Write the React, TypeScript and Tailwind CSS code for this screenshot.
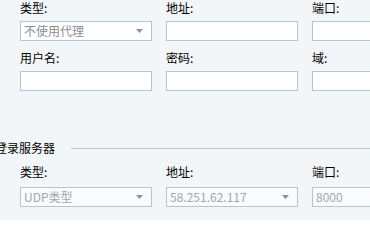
import React from 'react';

const font = { fontFamily: '"Noto Sans CJK SC", "Liberation Sans", sans-serif' };

function Caret() {
  return (
    <svg width="7" height="4" viewBox="0 0 7 4" className="shrink-0">
      <path d="M0 0 L7 0 L3.5 4 Z" fill="#8c9296" />
    </svg>
  );
}

function Field({ label, value, select, dim }: { label: string; value?: string; select?: boolean; dim?: boolean }) {
  return (
    <div className="flex flex-col">
      <div className={'h-4 leading-4 text-[12px] text-black ' + (dim ? 'mb-[7px]' : 'mb-[5px]')}>{label}</div>
      <div
        className={
          'h-5 border border-[#b3c6ce] flex items-center pl-[3px] pr-[8px] text-[12px] leading-4 ' +
          (dim ? 'bg-[#f9fbfc] text-[#a3a7aa]' : 'bg-white text-[#8a8d90]')
        }
      >
        <span className="flex-1 truncate">{value}</span>
        {select && <Caret />}
      </div>
    </div>
  );
}

export default function App() {
  return (
    <div className="w-[370px] h-[220px] overflow-hidden bg-[#f3f6f9] relative" style={font}>
      <div className="pl-5 grid grid-cols-[132px_132px_132px] gap-x-[14px] gap-y-[9px]">
        <Field label="类型:" value="不使用代理" select />
        <Field label="地址:" />
        <Field label="端口:" />
        <Field label="用户名:" />
        <Field label="密码:" />
        <Field label="域:" />
      </div>

      <div className="mt-[49px] flex items-center -ml-[5px] h-4">
        <span className="text-[12px] leading-4 text-black whitespace-nowrap">登录服务器</span>
        <div className="ml-[16px] flex-1 h-px bg-[#b4c8cf]" />
      </div>

      <div className="mt-[8px] pl-5 grid grid-cols-[132px_132px_132px] gap-x-[14px]">
        <Field label="类型:" value="UDP类型" select dim />
        <Field label="地址:" value="58.251.62.117" select dim />
        <Field label="端口:" value="8000" dim />
      </div>
    </div>
  );
}
